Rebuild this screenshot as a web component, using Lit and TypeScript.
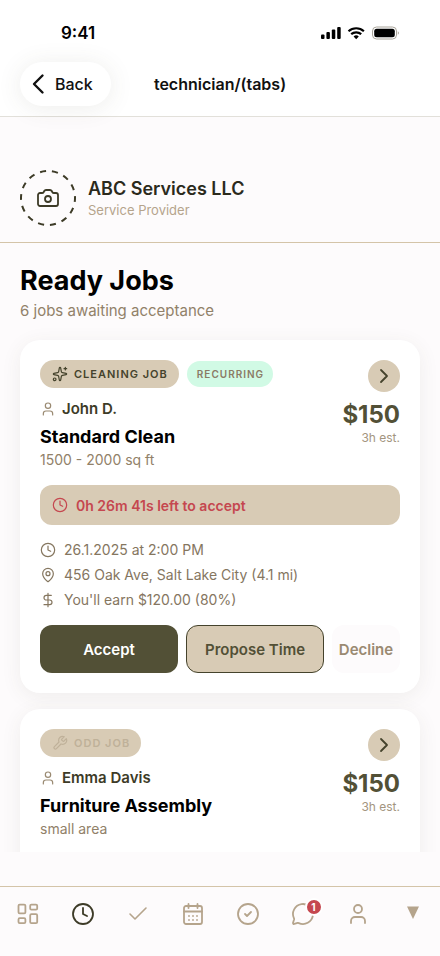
import { LitElement, html, css, svg, nothing } from "lit";
import { customElement, property } from "lit/decorators.js";

const icons = {
  back: svg`<path d="M15.500 3.500 7 12l8.500 8.500" stroke-width="2.400"/>`,
  chevron: svg`<path d="m9 18 6-6-6-6"/>`,
  camera: svg`<path d="M13.997 4a2 2 0 0 1 1.760 1.050l.486.900A2 2 0 0 0 18.003 7H20a2 2 0 0 1 2 2v9a2 2 0 0 1-2 2H4a2 2 0 0 1-2-2V9a2 2 0 0 1 2-2h1.997a2 2 0 0 0 1.759-1.048l.489-.904A2 2 0 0 1 10.004 4z"/><circle cx="12" cy="13" r="3"/>`,
  sparkle: svg`<path d="M11.017 2.814a1 1 0 0 1 1.966 0l1.051 5.558a2 2 0 0 0 1.594 1.594l5.558 1.051a1 1 0 0 1 0 1.966l-5.558 1.051a2 2 0 0 0-1.594 1.594l-1.051 5.558a1 1 0 0 1-1.966 0l-1.051-5.558a2 2 0 0 0-1.594-1.594l-5.558-1.051a1 1 0 0 1 0-1.966l5.558-1.051a2 2 0 0 0 1.594-1.594z"/><path d="M20 2v4M22 4h-4"/><circle cx="4" cy="20" r="2"/>`,
  wrench: svg`<path d="M14.700 6.300a1 1 0 0 0 0 1.400l1.600 1.600a1 1 0 0 0 1.400 0l3.770-3.770a6 6 0 0 1-7.940 7.940l-6.910 6.910a2.120 2.120 0 0 1-3-3l6.910-6.910a6 6 0 0 1 7.940-7.940z"/>`,
  person: svg`<path d="M19 21v-2a4 4 0 0 0-4-4H9a4 4 0 0 0-4 4v2"/><circle cx="12" cy="7" r="4"/>`,
  clock: svg`<circle cx="12" cy="12" r="10"/><path d="M12 6v6l4 2"/>`,
  pin: svg`<path d="M20 10c0 4.993-5.539 10.193-7.399 11.799a1 1 0 0 1-1.202 0C9.539 20.193 4 14.993 4 10a8 8 0 0 1 16 0"/><circle cx="12" cy="10" r="3"/>`,
  dollar: svg`<path d="M12 2v20M17 5H9.500a3.500 3.500 0 0 0 0 7h5a3.500 3.500 0 0 1 0 7H6"/>`,
  grid: svg`<rect x="2.500" y="2.600" width="6.900" height="8.800" rx="1.200"/><rect x="14.200" y="2.600" width="7" height="5" rx="1.200"/><rect x="14.200" y="12.200" width="7" height="8.900" rx="1.200"/><rect x="2.500" y="16.200" width="6.900" height="4.900" rx="1.200"/>`,
  check: svg`<path d="M20 6 9 17l-5-5" stroke-width="1.600"/>`,
  calendar: svg`<rect x="3" y="4" width="18" height="18" rx="2"/><path d="M7.500 2v4M16.500 2v4M3 9.500h18M8 14h.01M12 14h.01M16 14h.01M8 18h.01M12 18h.01M16 18h.01"/>`,
  checkCircle: svg`<circle cx="12" cy="12" r="10"/><path d="m9 12 2 2 4-4"/>`,
  chat: svg`<path d="M2.992 16.342a2 2 0 0 1 .094 1.167l-1.065 3.290a1 1 0 0 0 1.236 1.168l3.413-.998a2 2 0 0 1 1.099.092 10 10 0 1 0-4.777-4.719"/>`,
};

type IconName = keyof typeof icons;

@customElement("ui-icon")
class UiIcon extends LitElement {
  @property() name: IconName = "clock";

  static styles = css`
    :host { display: inline-flex; flex: none; width: 16px; height: 16px; }
    .glyph {
      width: 100%; height: 100%; fill: none; stroke: currentColor;
      stroke-width: 1.8; stroke-linecap: round; stroke-linejoin: round;
    }
  `;

  render() {
    return html`<svg class="glyph" viewBox="0 0 24 24" aria-hidden="true">${icons[this.name]}</svg>`;
  }
}

interface Job {
  kind: "cleaning" | "odd";
  label: string;
  recurring: boolean;
  customer: string;
  title: string;
  size: string;
  price: string;
  estimate: string;
  timeLeft: string;
  when: string;
  address: string;
  payout: string;
}

const jobs: Job[] = [
  {
    kind: "cleaning", label: "CLEANING JOB", recurring: true, customer: "John D.",
    title: "Standard Clean", size: "1500 - 2000 sq ft", price: "$150", estimate: "3h est.",
    timeLeft: "0h 26m 41s left to accept", when: "26.1.2025 at 2:00 PM",
    address: "456 Oak Ave, Salt Lake City (4.1 mi)", payout: "You'll earn $120.00 (80%)",
  },
  {
    kind: "odd", label: "ODD JOB", recurring: false, customer: "Emma Davis",
    title: "Furniture Assembly", size: "small area", price: "$150", estimate: "3h est.",
    timeLeft: "", when: "", address: "", payout: "",
  },
];

@customElement("job-card")
class JobCard extends LitElement {
  @property({ attribute: false }) job!: Job;

  static styles = css`
    :host { display: block; }
    .card {
      background: #fff; border-radius: 20px; padding: 20px; min-height: 200px;
      box-shadow: 0 4px 20px rgba(82, 80, 54, 0.08);
    }
    .top { display: flex; justify-content: space-between; gap: 8px; }
    .tags { display: flex; align-items: center; gap: 8px; height: 28px; }
    .tag {
      display: flex; align-items: center; gap: 6px; height: 28px; padding: 0 11px 0 12px;
      border-radius: 14px; background: #d8cbb5; color: #45432c; box-sizing: border-box;
      font-size: 11px; font-weight: 600; letter-spacing: 1px; white-space: nowrap;
    }
    .tag.odd { color: #bfb199; }
    .tag.recurring {
      height: 26px; padding: 0 9px 0 10px; background: #d1fae5; color: #8b7b65; font-size: 10px;
    }
    .customer {
      display: flex; align-items: center; gap: 6px; margin-top: 11px; line-height: 20px;
      font-size: 15px; font-weight: 600; color: #3d3b27;
    }
    .customer ui-icon { color: #9a8a72; }
    .title { margin: 6px 0 0; font-size: 18px; line-height: 24px; font-weight: 700; color: #000; }
    .size { margin: 1px 0 0; font-size: 14px; line-height: 20px; color: #918169; }
    .side { display: flex; flex-direction: column; align-items: flex-end; flex: none; }
    .open {
      display: grid; place-items: center; width: 32px; height: 32px; padding: 0; border: 0;
      border-radius: 50%; background: #d8cbb5; color: #45432c;
    }
    .open ui-icon { width: 24px; height: 24px; }
    .price { margin-top: 9px; font-size: 24px; line-height: 28px; font-weight: 700; color: #525036; }
    .est { margin-top: 1px; font-size: 12px; line-height: 16px; color: #a39580; }
    .timer {
      display: flex; align-items: center; gap: 8px; height: 40px; margin-top: 15px; padding: 0 12px;
      border-radius: 12px; background: #d8cbb5; color: #c5474f; font-size: 14px; font-weight: 600;
    }
    .facts {
      display: grid; gap: 5px; margin: 15px 0 0; padding: 0; list-style: none;
      font-size: 14px; line-height: 20px; color: #85765f;
    }
    .fact { display: flex; align-items: center; gap: 8px; }
    .actions { display: flex; gap: 8px; margin-top: 15px; }
    .btn {
      height: 48px; padding: 0; border: 1px solid transparent; border-radius: 12px;
      font: inherit; font-size: 15px; font-weight: 600; white-space: nowrap;
    }
    .accept { flex: 1 1 0; background: #525036; color: #fff; }
    .propose { flex: 1 1 0; background: #d8cbb5; border-color: #45432c; color: #525036; }
    .decline { width: 68px; background: #fdfbfc; color: #9a8a72; }
  `;

  render() {
    const j = this.job;
    return html`
      <article class="card">
        <div class="top">
          <div>
            <div class="tags">
              <span class="tag ${j.kind}">
                <ui-icon name=${j.kind === "odd" ? "wrench" : "sparkle"}></ui-icon>${j.label}
              </span>
              ${j.recurring ? html`<span class="tag recurring">RECURRING</span>` : nothing}
            </div>
            <div class="customer"><ui-icon name="person"></ui-icon>${j.customer}</div>
            <h2 class="title">${j.title}</h2>
            <p class="size">${j.size}</p>
          </div>
          <div class="side">
            <button class="open" aria-label="Open job"><ui-icon name="chevron"></ui-icon></button>
            <div class="price">${j.price}</div>
            <div class="est">${j.estimate}</div>
          </div>
        </div>
        ${j.timeLeft
          ? html`
              <div class="timer"><ui-icon name="clock"></ui-icon>${j.timeLeft}</div>
              <ul class="facts">
                <li class="fact"><ui-icon name="clock"></ui-icon>${j.when}</li>
                <li class="fact"><ui-icon name="pin"></ui-icon>${j.address}</li>
                <li class="fact"><ui-icon name="dollar"></ui-icon>${j.payout}</li>
              </ul>
              <div class="actions">
                <button class="btn accept">Accept</button>
                <button class="btn propose">Propose Time</button>
                <button class="btn decline">Decline</button>
              </div>
            `
          : nothing}
      </article>
    `;
  }
}

const tabs: { icon: IconName; label: string; badge?: string }[] = [
  { icon: "grid", label: "Dashboard" },
  { icon: "clock", label: "Ready jobs" },
  { icon: "check", label: "Accepted" },
  { icon: "calendar", label: "Calendar" },
  { icon: "checkCircle", label: "Completed" },
  { icon: "chat", label: "Messages", badge: "1" },
  { icon: "person", label: "Profile" },
];

@customElement("app-root")
class AppRoot extends LitElement {
  static styles = css`
    :host {
      display: flex; flex-direction: column; height: 100vh; background: #fdfbfc;
      font-family: Inter, "Liberation Sans", sans-serif; color: #000;
    }
    .header { flex: none; background: #fff; border-bottom: 1px solid #e2e0da; }
    .status {
      display: flex; justify-content: space-between; align-items: center;
      height: 24px; padding: 21px 41px 0 61px;
    }
    .time { font-size: 17px; font-weight: 600; line-height: 24px; }
    .signals { width: 78px; height: 14px; }
    .bar {
      display: grid; grid-template-columns: 1fr auto 1fr; align-items: center;
      padding: 17px 20px 10px;
    }
    .back {
      display: flex; align-items: center; gap: 4px; justify-self: start; height: 44px;
      padding: 0 18px 0 7px; border: 0; border-radius: 22px; background: #fff; color: #111;
      font: inherit; font-size: 16px; font-weight: 500;
      box-shadow: 0 2px 24px rgba(82, 80, 54, 0.1);
    }
    .back ui-icon { width: 24px; height: 24px; }
    .route { margin: 0; font-size: 16px; line-height: 24px; font-weight: 600; color: #111; }
    .profile {
      display: flex; flex: none; align-items: center; gap: 12px;
      padding: 53px 20px 16px; border-bottom: 1px solid #d4c4a8;
    }
    .avatar {
      display: grid; place-items: center; position: relative; width: 56px; height: 56px;
      padding: 0; border: 0; background: none; color: #3d3b27;
    }
    .avatar ui-icon { width: 24px; height: 24px; }
    .ring { position: absolute; inset: 0; width: 56px; height: 56px; fill: none; stroke: currentColor; }
    .company { font-size: 18px; line-height: 24px; font-weight: 600; color: #2b2a1c; }
    .role { font-size: 13px; line-height: 18px; color: #b5a48c; }
    .main { flex: 1 1 0; min-height: 0; overflow-y: auto; scrollbar-width: none; margin-bottom: 34px; }
    .heading { margin: 0; padding: 20px 20px 0; font-size: 27px; line-height: 36px; font-weight: 700; }
    .summary { margin: 0; padding: 2px 20px 0; font-size: 15px; line-height: 20px; color: #918169; }
    .list { display: grid; gap: 16px; padding: 19px 20px 20px; }
    .tabs {
      display: grid; grid-template-columns: repeat(8, 1fr); flex: none; height: 69px;
      border-top: 1px solid #d4c4a8;
    }
    .tab {
      display: flex; justify-content: center; align-items: flex-start; padding: 15px 0 0;
      border: 0; background: none; color: #b5a48c; font: inherit;
    }
    .tab.on { color: #3d3b27; }
    .tab ui-icon { width: 24px; height: 24px; }
    .holder { display: flex; position: relative; }
    .badge {
      position: absolute; top: -4px; right: -8px; width: 14px; height: 14px;
      border: 2px solid #fff; border-radius: 50%; background: #c5474f; color: #fff;
      font-size: 10px; line-height: 14px; font-weight: 700; text-align: center;
    }
    .more { width: 14px; height: 24px; fill: #b5a48c; }
  `;

  render() {
    return html`
      <header class="header">
        <div class="status">
          <span class="time">9:41</span>
          <svg class="signals" viewBox="0 0 78 14" aria-hidden="true">
            <rect x="0" y="8.500" width="3.500" height="4.500" rx="1"/>
            <rect x="5.400" y="6" width="3.500" height="7" rx="1"/>
            <rect x="10.800" y="3.500" width="3.500" height="9.500" rx="1"/>
            <rect x="16.200" y="1" width="3.500" height="12" rx="1"/>
            <g fill="none" stroke="#000" stroke-width="2.200">
              <path d="M27.500 5.200a11.500 11.500 0 0 1 15.400 0"/>
              <path d="M30.200 8.200a7.600 7.600 0 0 1 10 0"/>
            </g>
            <path d="M35.200 13.200l-2.600-2.700a3.800 3.800 0 0 1 5.200 0z"/>
            <rect x="51.500" y="1" width="24" height="12" rx="4" fill="none" stroke="#a9a49a"/>
            <rect x="53.200" y="2.700" width="20.600" height="8.600" rx="2.500"/>
            <path d="M76.800 5.200v3.600a2 2 0 0 0 0-3.600z" fill="#a9a49a"/>
          </svg>
        </div>
        <nav class="bar">
          <button class="back"><ui-icon name="back"></ui-icon>Back</button>
          <h1 class="route">technician/(tabs)</h1>
        </nav>
      </header>
      <section class="profile">
        <button class="avatar" aria-label="Add photo">
          <svg class="ring" viewBox="0 0 56 56" aria-hidden="true">
            <circle cx="28" cy="28" r="27" pathLength="168" stroke-width="2" stroke-dasharray="6 6" stroke-dashoffset="2"/>
          </svg>
          <ui-icon name="camera"></ui-icon>
        </button>
        <div>
          <div class="company">ABC Services LLC</div>
          <div class="role">Service Provider</div>
        </div>
      </section>
      <main class="main">
        <h2 class="heading">Ready Jobs</h2>
        <p class="summary">6 jobs awaiting acceptance</p>
        <div class="list">${jobs.map((job) => html`<job-card .job=${job}></job-card>`)}</div>
      </main>
      <nav class="tabs">
        ${tabs.map(
          (tab, i) => html`
            <button class="tab ${i === 1 ? "on" : ""}" aria-label=${tab.label}>
              <span class="holder">
                <ui-icon name=${tab.icon}></ui-icon>
                ${tab.badge ? html`<span class="badge">${tab.badge}</span>` : nothing}
              </span>
            </button>
          `,
        )}
        <button class="tab" aria-label="More">
          <svg class="more" viewBox="0 0 14 24" aria-hidden="true"><path d="M1 4.500h12L7 17z"/></svg>
        </button>
      </nav>
    `;
  }
}
